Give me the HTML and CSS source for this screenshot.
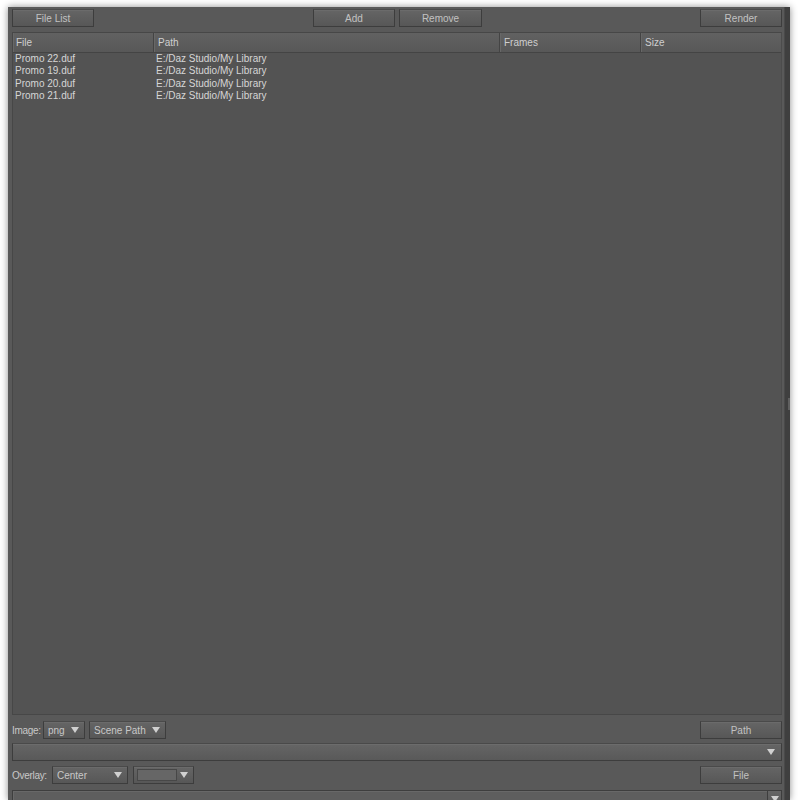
FILE: index.html
```html
<!DOCTYPE html>
<html>
<head>
<meta charset="utf-8">
<link rel="stylesheet" href="styles.css">
</head>
<body>
<div class="window">
  <div class="main">
    <div class="toolbar">
      <div class="tb-left"><button class="btn">File List</button></div>
      <div class="tb-center"><button class="btn">Add</button><button class="btn btn-remove">Remove</button></div>
      <div class="tb-right"><button class="btn">Render</button></div>
    </div>
    <div class="list">
      <div class="header">
        <div class="hcell c-file">File</div>
        <div class="hcell c-path">Path</div>
        <div class="hcell c-frames">Frames</div>
        <div class="hcell c-size">Size</div>
      </div>
      <div class="rows">
        <div class="row"><span class="c-file">Promo 22.duf</span><span class="c-path">E:/Daz Studio/My Library</span></div>
        <div class="row"><span class="c-file">Promo 19.duf</span><span class="c-path">E:/Daz Studio/My Library</span></div>
        <div class="row"><span class="c-file">Promo 20.duf</span><span class="c-path">E:/Daz Studio/My Library</span></div>
        <div class="row"><span class="c-file">Promo 21.duf</span><span class="c-path">E:/Daz Studio/My Library</span></div>
      </div>
    </div>
    <div class="optrow optrow-image">
      <span class="label label-image">Image:</span>
      <div class="drop drop-png"><span>png</span><span class="arrow"></span></div>
      <div class="drop drop-scene"><span>Scene Path</span><span class="arrow"></span></div>
      <div class="spacer"></div>
      <button class="btn">Path</button>
    </div>
    <div class="combo"><span class="arrow"></span></div>
    <div class="optrow optrow-overlay">
      <span class="label label-overlay">Overlay:</span>
      <div class="drop drop-center"><span>Center</span><span class="arrow"></span></div>
      <div class="drop drop-color"><span class="swatch"></span><span class="arrow"></span></div>
      <div class="spacer"></div>
      <button class="btn">File</button>
    </div>
    <div class="editcombo">
      <div class="field"></div>
      <div class="ebtn"><span class="arrow"></span></div>
    </div>
  </div>
  <div class="edge"><span class="grip"></span></div>
</div>
</body>
</html>
```

FILE: styles.css
```css
html, body {
  margin: 0;
  padding: 0;
  background: #ffffff;
}
body {
  font-family: "Liberation Sans", Arial, sans-serif;
  font-size: 10px;
  color: #d2d2d2;
}
.window {
  margin: 7px 0 0 8px;
  width: 782px;
  height: 793px;
  display: flex;
  background: #595959;
  box-shadow: 0 0 7px rgba(0, 0, 0, 0.45);
  overflow: hidden;
}
.main {
  flex: 1;
  display: flex;
  flex-direction: column;
  padding: 2px 2px 0 4px;
  overflow: hidden;
}
.edge {
  width: 5px;
  background: #3f3f3f;
  border-left: 1px solid #4a4a4a;
  display: flex;
  align-items: center;
  justify-content: flex-end;
}
.grip {
  width: 2px;
  height: 12px;
  background: #606060;
}
.btn {
  font-family: "Liberation Sans", Arial, sans-serif;
  font-size: 10px;
  color: #c2c2c2;
  width: 82px;
  height: 18px;
  padding: 0;
  margin: 0;
  border: 1px solid #3d3d3d;
  border-top-color: #4a4a4a;
  background: linear-gradient(#656565, #575757);
  box-shadow: inset 0 1px 0 #6b6b6b;
  text-align: center;
}
.toolbar {
  display: grid;
  grid-template-columns: 1fr auto 1fr;
  height: 18px;
  flex: none;
}
.tb-center {
  display: flex;
  gap: 4px;
  padding-left: 1px;
}
.btn-remove { width: 83px; }
.tb-right {
  display: flex;
  justify-content: flex-end;
}
.list {
  margin-top: 5px;
  height: 681px;
  flex: none;
  background: #535353;
  border: 1px solid #474747;
  border-right-color: #4c4c4c;
  display: flex;
  flex-direction: column;
  overflow: hidden;
}
.header {
  display: flex;
  height: 19px;
  background: linear-gradient(#616161, #585858);
  border-bottom: 1px solid #444444;
}
.hcell {
  box-sizing: border-box;
  padding: 4px 0 0 2px;
  border-right: 1px solid #444444;
  border-left: 1px solid #686868;
  color: #cfcfcf;
  height: 19px;
}
.header .c-path, .header .c-frames, .header .c-size { padding-left: 3px; }
.c-file { width: 141px; flex: none; }
.c-path { width: 346px; flex: none; }
.c-frames { width: 141px; flex: none; }
.c-size { width: 141px; flex: none; }
.row {
  display: flex;
  height: 12.4px;
  line-height: 12.4px;
  color: #d6d6d6;
}
.row span {
  box-sizing: border-box;
  padding-left: 2px;
  white-space: nowrap;
}
.optrow {
  display: flex;
  align-items: center;
  height: 18px;
  flex: none;
}
.optrow-image { margin-top: 6px; }
.optrow-overlay { margin-top: 5px; }
.label {
  color: #c8c8c8;
  white-space: nowrap;
  flex: none;
  letter-spacing: -0.3px;
}
.label-image { width: 31px; }
.label-overlay { width: 40px; }
.spacer { flex: 1; }
.drop {
  box-sizing: border-box;
  height: 18px;
  display: flex;
  align-items: center;
  justify-content: space-between;
  padding: 0 5px 0 4px;
  border: 1px solid #3d3d3d;
  border-top-color: #4a4a4a;
  background: linear-gradient(#656565, #575757);
  box-shadow: inset 0 1px 0 #6b6b6b;
  color: #c8c8c8;
  flex: none;
}
.drop + .drop { margin-left: 4px; }
.drop-png { width: 42px; }
.drop-scene { width: 77px; }
.drop-center { width: 76px; }
.drop-color {
  width: 61px;
  padding: 0 5px 0 3px;
  margin-left: 5px !important;
}
.swatch {
  width: 40px;
  height: 12px;
  box-sizing: border-box;
  background: #666666;
  border: 1px solid #474747;
}
.arrow {
  width: 0;
  height: 0;
  border-left: 4px solid transparent;
  border-right: 4px solid transparent;
  border-top: 6px solid #d0d0d0;
}
.combo {
  margin-top: 4px;
  box-sizing: border-box;
  height: 18px;
  flex: none;
  display: flex;
  align-items: center;
  justify-content: flex-end;
  padding-right: 6px;
  border: 1px solid #3d3d3d;
  border-top-color: #4a4a4a;
  background: linear-gradient(#656565, #595959);
  box-shadow: inset 0 1px 0 #6c6c6c;
}
.editcombo {
  margin-top: 6px;
  height: 18px;
  display: flex;
  flex: none;
}
.field {
  flex: 1;
  box-sizing: border-box;
  border: 1px solid #3e3e3e;
  background: #5e5e5e;
  box-shadow: inset 1px 1px 0 #686868;
}
.ebtn {
  width: 14px;
  box-sizing: border-box;
  display: flex;
  justify-content: center;
  padding-top: 5px;
  border: 1px solid #3d3d3d;
  border-left: none;
  background: linear-gradient(#656565, #575757);
}
```
